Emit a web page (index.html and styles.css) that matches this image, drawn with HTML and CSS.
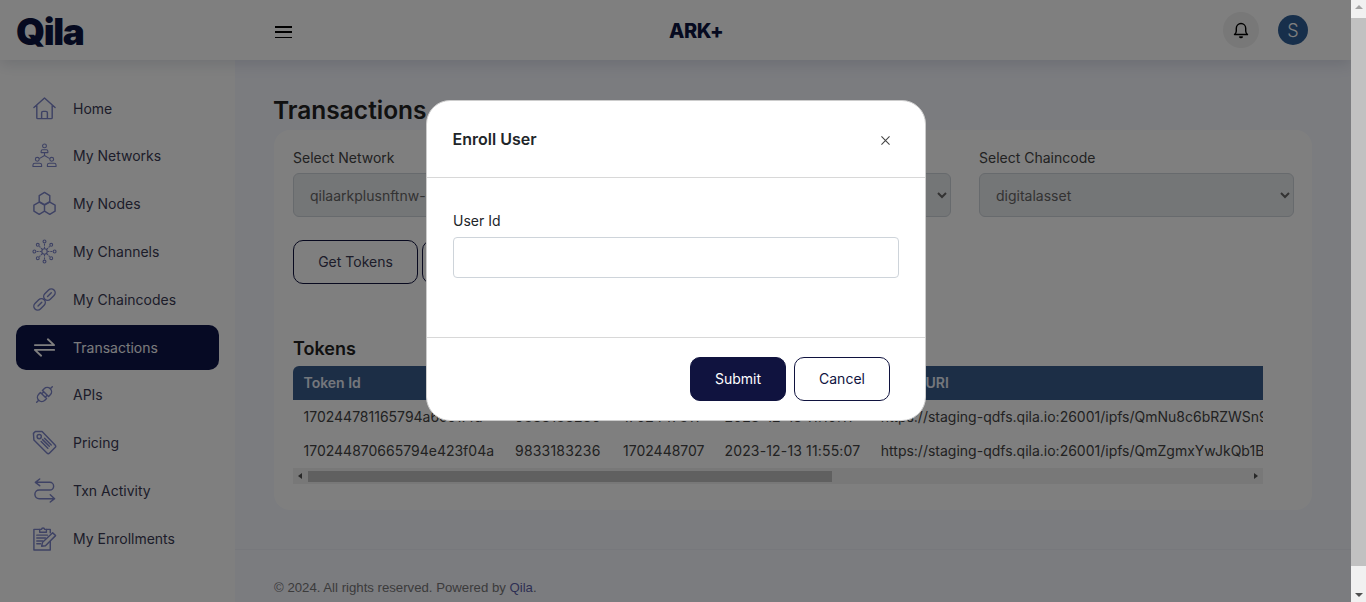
FILE: index.html
```html
<!DOCTYPE html>
<html lang="en">
<head>
<meta charset="utf-8">
<title>Qila - Transactions</title>
<link rel="stylesheet" href="styles.css">
</head>
<body>
<div class="viewport">
  <div class="page">
    <header class="topbar">
      <div class="brand"><span class="logo">Qila</span></div>
      <button class="burger" aria-label="Menu"><span></span><span></span><span></span></button>
      <div class="center-logo">ARK+</div>
      <div class="top-actions">
        <div class="bell"><svg width="18" height="18" viewBox="0 0 18 18" fill="none" stroke="#000" stroke-width="1.4" stroke-linejoin="round"><path d="M2.500 13.500c1.200-1 1.800-2 1.800-3.600V7.200a4.700 4.700 0 0 1 9.400 0v2.700c0 1.600.6 2.600 1.800 3.600z"/><path d="M7.500 15.500a1.600 1.600 0 0 0 3 0" fill="#000"/></svg></div>
        <div class="avatar">S</div>
      </div>
    </header>
    <div class="shell">
      <nav class="sidebar">
        <a class="nav-item"><svg class="ico" viewBox="0 0 26 26"><path d="M2 12 13 2l11 10M5 10v12.500a1 1 0 0 0 1 1h14a1 1 0 0 0 1-1V10M10 23.500v-6a1.500 1.500 0 0 1 1.500-1.500h3a1.500 1.500 0 0 1 1.500 1.500v6"/></svg><span>Home</span></a>
        <a class="nav-item"><svg class="ico thin" viewBox="0 0 26 26"><circle cx="13" cy="3" r="2"/><path d="M9.500 10V8.500A1.500 1.500 0 0 1 11 7h4a1.500 1.500 0 0 1 1.500 1.500V10zM13 10v3M13 13l-5 3M13 13l5 3"/><circle cx="5.500" cy="17" r="2"/><circle cx="20.500" cy="17" r="2"/><path d="M1 24.500V23a2 2 0 0 1 2-2h5a2 2 0 0 1 2 2v1.500zM16 24.500V23a2 2 0 0 1 2-2h5a2 2 0 0 1 2 2v1.500z"/></svg><span>My Networks</span></a>
        <a class="nav-item"><svg class="ico" viewBox="0 0 26 26"><path d="m13 1.500 5.500 3.200V11L13 14.200 7.500 11V4.700zM7.500 11.500l5.500 3.200V21l-5.500 3.200L2 21v-6.300zM18.500 11.500l5.500 3.200V21l-5.500 3.200L13 21v-6.300z"/></svg><span>My Nodes</span></a>
        <a class="nav-item"><svg class="ico thin" viewBox="0 0 26 26"><circle cx="13" cy="13" r="2.800"/><circle cx="13" cy="2.500" r="1.500"/><circle cx="13" cy="23.500" r="1.500"/><circle cx="2.500" cy="13" r="1.500"/><circle cx="23.500" cy="13" r="1.500"/><circle cx="6" cy="6" r="1.500"/><circle cx="20" cy="6" r="1.500"/><circle cx="6" cy="20" r="1.500"/><circle cx="20" cy="20" r="1.500"/><path stroke-dasharray="1.200 1.800" d="M13 9.500V5M13 16.500V21M9.500 13H5M16.500 13H21M10.500 10.500 8 8M15.500 10.500 18 8M10.500 15.500 8 18M15.500 15.500 18 18"/></svg><span>My Channels</span></a>
        <a class="nav-item"><svg class="ico" viewBox="0 0 26 26"><g transform="rotate(-45 13 13)"><rect x="-1" y="9" width="13.500" height="8" rx="4"/><rect x="13.500" y="9" width="13.500" height="8" rx="4"/><path d="M3.500 13h5.500M17.500 13H23"/></g></svg><span>My Chaincodes</span></a>
        <a class="nav-item active"><svg class="ico swap" viewBox="0 0 26 26"><path d="M3 10.500h20L16.500 4.500M23 15.500H3L9.500 21.500"/></svg><span>Transactions</span></a>
        <a class="nav-item"><svg class="ico" viewBox="0 0 26 26"><g transform="rotate(45 13 13)"><path d="M8.500 11.500V9a4.500 4.500 0 0 1 9 0v2.500zM8.500 14.500V17a4.500 4.500 0 0 0 9 0v-2.500zM13 4.500V1.500M13 21.500v3M10.500 11.500v3M15.500 11.500v3"/></g></svg><span>APIs</span></a>
        <a class="nav-item"><svg class="ico" viewBox="0 0 26 26"><path d="M1.500 3.500 3.500 1.500h7l13.500 14a2 2 0 0 1 0 2.800L18.300 24a2 2 0 0 1-2.800 0L2 10.500z"/><circle cx="7.500" cy="6.800" r="2.200"/><path d="m11 10 7 7M13 8.500l7 7M9.500 12l7 7"/></svg><span>Pricing</span></a>
        <a class="nav-item"><svg class="ico" viewBox="0 0 26 26"><path d="M8 1 3.500 4.500 8 8M3.500 4.500h15a4 4 0 0 1 0 8h-11a4.500 4.500 0 0 0 0 9H23M19 17.500l4.500 4-4.500 3.500"/></svg><span>Txn Activity</span></a>
        <a class="nav-item"><svg class="ico" viewBox="0 0 26 26"><path d="M8 3.500H2V25h17v-9M15 3.500h4V7"/><path d="M8 5V3.500h2a1.500 1.500 0 0 1 3 0h2v3H8zM5 9.500h11M5 12.500h9M5 15.500h6M5 18.500h4"/><path d="m10 21 1-4L21.500 7l3 3L14 20.500z"/></svg><span>My Enrollments</span></a>
      </nav>
      <main class="main">
        <div class="content">
          <h1 class="page-title">Transactions</h1>
          <section class="card">
            <div class="selects">
              <label class="field"><span>Select Network</span><select disabled class="sel"><option>qilaarkplusnftnw-01</option></select></label>
              <label class="field"><span>Select Channel</span><select disabled class="sel"><option>digitalassetchannel</option></select></label>
              <label class="field"><span>Select Chaincode</span><select disabled class="sel"><option>digitalasset</option></select></label>
            </div>
            <div class="actions">
              <button class="btn-outline">Get Tokens</button>
              <button class="btn-outline">Enroll User</button>
            </div>
            <h2 class="section-title">Tokens</h2>
            <div class="table-wrap">
              <table class="tokens">
                <thead><tr><th>Token Id</th><th class="col-phone">Phone</th><th class="col-time">Timestamp</th><th class="col-date">Date</th><th>Token URI</th></tr></thead>
                <tbody>
                  <tr><td>170244781165794a6c517fd</td><td class="col-phone">9833183236</td><td class="col-time">1702447811</td><td class="col-date">2023-12-13 11:10:11</td><td>https://staging-qdfs.qila.io:26001/ipfs/QmNu8c6bRZWSn9</td></tr>
                  <tr><td>170244870665794e423f04a</td><td class="col-phone">9833183236</td><td class="col-time">1702448707</td><td class="col-date">2023-12-13 11:55:07</td><td>https://staging-qdfs.qila.io:26001/ipfs/QmZgmxYwJkQb1B</td></tr>
                </tbody>
              </table>
              <div class="hscroll"><i class="arrow-l"></i><div class="hthumb"></div><i class="arrow-r"></i></div>
            </div>
          </section>
        </div>
        <footer class="footer">© 2024. All rights reserved. Powered by <a class="footer-link">Qila</a>.</footer>
      </main>
    </div>
    <div class="backdrop">
      <div class="modal">
        <div class="modal-head"><h3>Enroll User</h3><button class="close" aria-label="Close"><svg width="9" height="9" viewBox="0 0 10 10" stroke="#444" stroke-width="1.200"><path d="m.5.500 9 9M9.500.500l-9 9"/></svg></button></div>
        <div class="modal-body"><label class="modal-label">User Id</label><input class="modal-input" type="text"></div>
        <div class="modal-foot"><button class="btn-primary">Submit</button><button class="btn-cancel">Cancel</button></div>
      </div>
    </div>
  </div>
  <div class="vscroll"><i class="arrow-u"></i><div class="vthumb"></div><i class="arrow-d"></i></div>
</div>
</body>
</html>
```
FILE: styles.css
```css
* { box-sizing: border-box; }
html, body { margin: 0; height: 100%; overflow: hidden; }
body { font-family: Inter, "Liberation Sans", sans-serif; font-size: 14px; color: #3a3a54; background: #fff; }
.viewport { display: flex; width: 1366px; height: 602px; }
.page { position: relative; width: 1351px; height: 602px; overflow: hidden; display: flex; flex-direction: column; }

.topbar { position: relative; z-index: 2; flex: none; height: 60px; background: #fff; display: flex; align-items: center; box-shadow: 0 4px 14px rgba(30,40,80,.14); }
.brand { width: 275px; padding: 2px 0 0 16px; line-height: 1; }
.logo { font-size: 37px; font-weight: 900; letter-spacing: -1.4px; color: #0d1440; }
.burger { width: 17px; height: 12px; margin-top: 4px; padding: 0; border: 0; background: none; display: flex; flex-direction: column; justify-content: space-between; }
.burger span { display: block; height: 1.500px; background: #000; }
.center-logo { margin: 2px 0 0 377px; width: 60px; font-size: 20px; font-weight: 800; letter-spacing: -.4px; color: #0d1440; }
.top-actions { margin-left: auto; margin-right: 43px; display: flex; align-items: center; gap: 19px; }
.bell { width: 36px; height: 36px; border-radius: 50%; background: #f0f0f0; display: flex; align-items: center; justify-content: center; }
.avatar { width: 30px; height: 30px; border-radius: 50%; background: #2f5f96; color: #fff; font-size: 18px; font-weight: 300; display: flex; align-items: center; justify-content: center; }

.shell { flex: 1; display: flex; min-height: 0; }
.sidebar { flex: none; width: 235px; background: #fff; padding: 25.600px 16px 0; display: flex; flex-direction: column; gap: 2.800px; }
.nav-item { height: 45px; flex: none; display: flex; align-items: center; gap: 16px; padding-left: 16px; border-radius: 10px; color: #3a3a54; }
.ico { flex: none; width: 25px; height: 25px; fill: none; stroke: #7c84c8; stroke-width: 1.500; stroke-linejoin: round; stroke-linecap: round; }
.ico.thin { stroke-width: 1.150; }
.nav-item.active { background: #0d1449; color: #f4f4f8; }
.ico.swap { stroke: #fff; stroke-width: 2; }

.main { flex: 1; min-width: 0; display: flex; flex-direction: column; background: #f6f8ff; }
.content { flex: 1; padding: 35px 39px 0; }
.page-title { margin: 0 0 5px -1px; font-size: 24.500px; line-height: 30px; font-weight: 600; color: #222; }
.card { height: 380px; background: #fff; border-radius: 16px; padding: 19px; }
.selects { display: grid; grid-template-columns: repeat(3, 315px); gap: 28px; }
.field { display: flex; flex-direction: column; gap: 7px; color: #444; line-height: 17px; }
.sel { height: 44px; padding: 0 12px; font: inherit; color: #666; background-color: #e9ecef; border: 1px solid #ced4da; border-radius: 6px; opacity: 1; }
.actions { display: flex; gap: 4px; margin-top: 23px; }
.btn-outline { width: 125px; height: 44px; padding: 0 0 2px; font: inherit; color: #3a3a54; background: #fff; border: 1px solid #10133f; border-radius: 10px; }
.section-title { margin: 54px 0 6px; font-size: 18px; line-height: 22px; font-weight: 600; color: #222; }

.table-wrap { width: 970px; overflow: hidden; }
.tokens { width: max-content; border-collapse: separate; border-spacing: 0; white-space: nowrap; }
.tokens th { height: 34px; padding: 0 10.500px 2px; text-align: left; background: #385c8c; color: #e9eef8; font-weight: 600; }
.tokens th:first-child { border-top-left-radius: 6px; }
.tokens th.col-phone { width: 108px; }
.tokens td { height: 34px; padding: 0 10.500px 2px; color: #444; }
.tokens td.col-phone { letter-spacing: .2px; }
.tokens .col-time { padding-right: 9.500px; }
.tokens .col-date { padding-right: 10px; }
.tokens td.col-date { letter-spacing: .15px; }
.hscroll { display: flex; align-items: center; height: 16px; background: #f1f1f1; }
.hthumb { width: 524px; height: 11px; margin-left: 6px; background: #c1c1c1; }
.arrow-l { margin-left: 5px; width: 0; height: 0; border: 3.500px solid transparent; border-left: 0; border-right: 4px solid #505050; }
.arrow-r { margin-left: auto; margin-right: 5px; width: 0; height: 0; border: 3.500px solid transparent; border-right: 0; border-left: 4px solid #505050; }

.footer { flex: none; height: 53px; padding: 30px 39px 0; border-top: 1px solid #eef0f8; font-family: "Liberation Sans", Arial, sans-serif; font-size: 13.200px; line-height: 15px; color: #777; }
.footer-link { color: #5b5fa8; }

.backdrop { position: absolute; inset: 0; z-index: 5; background: rgba(0,0,0,.5); }
.modal { position: absolute; left: 426px; top: 100px; width: 500px; height: 321px; background: #fff; border-radius: 24px; border: 1px solid #ccc; display: flex; flex-direction: column; }
.modal-head { flex: none; height: 77px; padding: 0 26px 0 25.500px; border-bottom: 1px solid #d8d8d8; display: flex; align-items: center; justify-content: space-between; }
.modal-head h3 { margin: 0; font-size: 16px; font-weight: 600; color: #212529; }
.close { width: 20px; height: 20px; margin: 2px 4px 0 0; padding: 0; border: 0; background: none; display: flex; align-items: center; justify-content: center; }
.modal-body { flex: 1; padding: 34px 26px 0; }
.modal-label { display: block; margin-bottom: 8px; line-height: 17px; color: #212529; }
.modal-input { display: block; width: 446px; height: 41px; border: 1px solid #ced4da; border-radius: 4px; background: #fff; }
.modal-foot { flex: none; height: 83px; border-top: 1px solid #d8d8d8; padding: 19px 35px 0 0; display: flex; justify-content: flex-end; gap: 8px; }
.btn-primary, .btn-cancel { width: 96px; height: 44px; padding: 0 0 2px; font: inherit; border-radius: 10px; }
.btn-primary { background: #10133f; border: 1px solid #10133f; color: #fff; }
.btn-cancel { background: #fff; border: 1px solid #10133f; color: #10133f; }

.vscroll { flex: none; width: 15px; height: 602px; background: #f1f1f1; display: flex; flex-direction: column; align-items: center; }
.vthumb { width: 15px; height: 548px; margin-top: 9px; background: #c1c1c1; }
.arrow-u { margin-top: 5px; width: 0; height: 0; border: 4px solid transparent; border-top: 0; border-bottom: 4px solid #a3a3a3; }
.arrow-d { margin-top: auto; margin-bottom: 5px; width: 0; height: 0; border: 4px solid transparent; border-bottom: 0; border-top: 4px solid #505050; }
```
